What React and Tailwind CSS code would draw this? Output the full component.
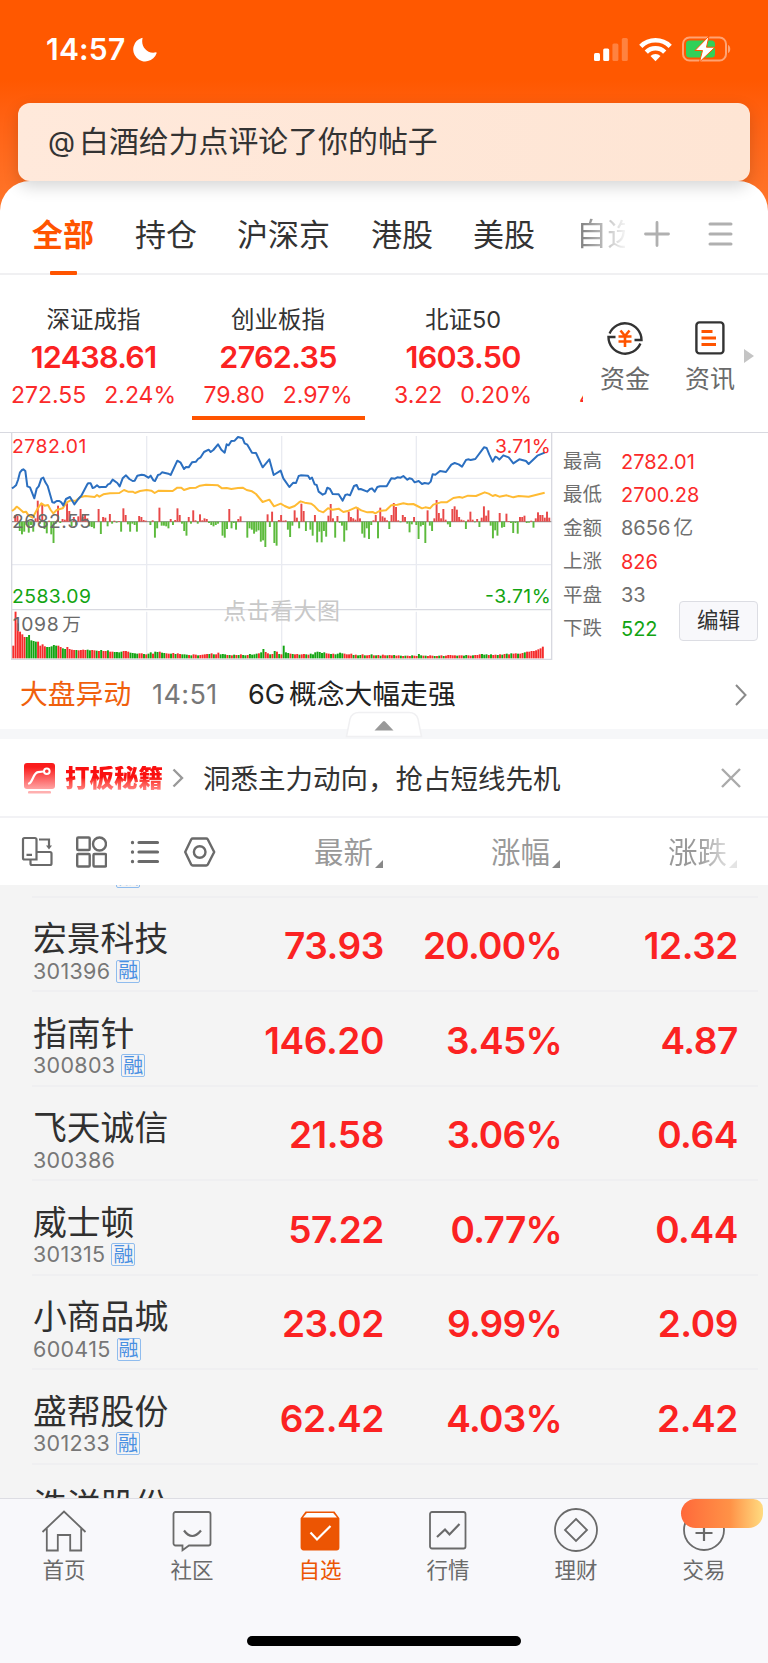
import { useState } from 'react';

const TABS = [
  { name: '全部', gap: '' },
  { name: '持仓', gap: 'ml-[41px]' },
  { name: '沪深京', gap: 'ml-[40px]' },
  { name: '港股', gap: 'ml-[41px]' },
  { name: '美股', gap: 'ml-[40px]' },
];

const INDEXES = [
  { name: '深证成指', value: '12438.61', diff: '272.55', pct: '2.24%', box: 'w-[187px]' },
  { name: '创业板指', value: '2762.35', diff: '79.80', pct: '2.97%', box: 'w-[182px]' },
  { name: '北证50', value: '1603.50', diff: '3.22', pct: '0.20%', box: 'w-[188px]' },
];

const STATS = [
  { label: '最高', value: '2782.01', color: 'text-[#fb2a2a]' },
  { label: '最低', value: '2700.28', color: 'text-[#fb2a2a]' },
  { label: '金额', value: '8656', unit: '亿', color: 'text-[#6f6f6f]' },
  { label: '上涨', value: '826', color: 'text-[#fb2a2a]' },
  { label: '平盘', value: '33', color: 'text-[#6f6f6f]' },
  { label: '下跌', value: '522', color: 'text-[#12a412]' },
];

const STOCKS = [
  { name: '宏景科技', code: '301396', margin: true, price: '73.93', pct: '20.00%', change: '12.32' },
  { name: '指南针', code: '300803', margin: true, price: '146.20', pct: '3.45%', change: '4.87' },
  { name: '飞天诚信', code: '300386', margin: false, price: '21.58', pct: '3.06%', change: '0.64' },
  { name: '威士顿', code: '301315', margin: true, price: '57.22', pct: '0.77%', change: '0.44' },
  { name: '小商品城', code: '600415', margin: true, price: '23.02', pct: '9.99%', change: '2.09' },
  { name: '盛帮股份', code: '301233', margin: true, price: '62.42', pct: '4.03%', change: '2.42' },
];

// Chart space is 3 units per pixel
const PRICE_LINE =
  '36,190 42,186 48,181 54,165 60,142 66,135 70,133 76,138 82,184 90,187 103,220 110,191 116,184 124,161 130,158 136,172 143,183 157,232 163,233 170,228 178,228 184,232 190,241 198,222 210,216 223,238 235,222 244,212 262,178 264,175 272,175 278,189 284,187 291,181 298,187 304,186 318,186 324,178 330,176 338,164 352,174 359,184 368,160 378,151 388,162 398,168 404,167 412,152 425,149 434,151 445,158 452,152 460,166 465,168 474,150 480,148 486,142 505,146 512,150 532,107 542,113 552,132 558,126 566,127 576,112 588,110 594,102 602,97 612,81 626,74 632,81 640,75 654,58 664,74 674,83 680,58 686,61 694,48 704,47 714,36 728,40 734,55 742,59 756,83 768,84 788,127 808,103 821,150 842,137 850,160 868,186 880,173 888,174 896,153 902,151 924,152 930,162 936,158 944,178 950,180 956,200 968,209 976,205 982,188 990,192 998,207 1016,208 1028,227 1036,210 1042,208 1050,211 1062,183 1070,180 1076,193 1082,192 1102,200 1110,192 1116,190 1124,200 1132,186 1140,184 1160,184 1174,160 1185,161 1192,157 1202,158 1210,153 1222,164 1228,160 1236,162 1244,172 1256,168 1266,177 1274,174 1286,176 1292,170 1298,148 1306,149 1320,138 1338,141 1354,119 1364,114 1376,118 1386,125 1398,105 1404,103 1412,105 1426,102 1452,67 1460,69 1468,89 1478,110 1486,95 1492,98 1498,104 1510,91 1526,97 1540,115 1558,103 1578,108 1586,117 1612,92 1634,83';

const AVG_LINE =
  '36,258 44,252 50,245 56,249 70,262 78,260 86,272 98,278 112,252 124,235 134,242 144,240 152,255 160,265 170,255 188,250 200,232 212,226 226,228 240,217 256,213 284,216 291,210 298,215 310,208 330,205 358,204 372,195 384,200 398,200 405,204 420,198 440,195 454,197 464,204 476,197 518,198 532,188 544,188 552,195 570,189 588,188 600,182 618,179 654,181 666,190 680,189 694,192 714,189 728,188 740,195 756,199 768,207 788,231 808,224 822,244 842,236 854,243 868,249 884,243 896,233 902,229 914,233 934,236 944,244 956,257 970,262 984,250 998,254 1016,251 1030,261 1046,257 1068,247 1084,256 1102,262 1118,261 1126,265 1138,258 1158,256 1174,241 1192,239 1210,235 1224,238 1240,237 1252,243 1266,250 1276,247 1290,250 1300,239 1322,232 1340,232 1360,219 1378,216 1388,218 1404,212 1428,213 1454,202 1466,206 1478,213 1486,210 1498,215 1520,211 1540,217 1556,213 1586,215 1610,209 1634,203';

const FLOW = [
  0, 20, 18, -28, -38, -30, -10, -33, -10, -30, 10, 63, -6, 52, -22, -35, 3, -38, -64, -6, 48, -4, 8, 6, 55, 32, -14, 14,
  -10, 16, 38, 15, 22, 10, -14, -16, -20, 0, 38, -37, 14, 12, -14, 23, -6, 3, -3, 2, -30, 40, 20, -8, -30, -6, -10, -30,
  17, 14, 5, 3, 0, -10, 4, -48, -20, 42, -12, -12, -14, -20, 8, -10, 5, 40, 20, -6, -28, -42, 14, -6, 34, 4, -6, 22, 4,
  10, 8, -4, -10, -14, -10, -6, 0, -42, -48, -22, 38, -20, -4, -24, 8, 16, 0, 0, -48, -20, -24, -36, -30, -26, -60, -56,
  -76, 22, -16, 30, -64, -72, 5, 20, 3, 4, -24, -46, -12, 34, 12, -20, 54, 32, -28, 0, -24, -42, 20, -62, -30, -62, -28,
  -45, 18, 53, 10, -48, 17, -4, -12, -60, -26, 30, 14, 10, 6, 42, 10, -36, -48, -20, -52, -10, 4, 20, -50, 42, 16, 12,
  4, -22, 20, 56, 44, 4, -2, 20, 14, -6, -32, -8, 14, -10, -52, -14, -10, -64, 34, -12, -28, 10, 65, 26, 10, 38, 6, -8,
  -16, 38, 46, 36, 14, 6, 4, -22, 6, 30, 6, -2, 8, -16, 12, 46, 18, 34, -12, -50, -26, -42, 26, -18, -16, 24, 2, -4,
  -34, -4, -36, 14, 14, 18, -4, -3, 3, -18, 10, 28, 20, 20, 12, 30, 12,
];

// negative = falling minute
const VOLUME = [
  38, 140, 105, 80, 72, 64, -64, -70, -54, -52, -50, 50, 38, 42, 36, -34, -34, -36, -40, -38, 38, 34, -30, -28, 34, 28,
  26, 25, -25, 24, 25, 26, 25, -26, -24, 25, 24, -23, 22, -25, 22, 22, -24, 20, 20, -19, -19, -18, -20, 22, 22, 20, -17,
  -16, -15, -14, 15, 15, -13, 12, -14, -18, 14, -20, -19, 20, -17, -16, 15, 14, -14, 16, -13, 15, 13, -12, -12, -11, 10,
  -9, 12, 11, -9, 10, 11, 12, 13, -13, 15, -12, 12, 17, -12, -13, -12, 10, -10, 9, -11, 10, -10, 12, -10, -9, 10, -13,
  -11, -12, -14, 15, -18, -28, 19, 15, -12, 13, -22, 20, -13, 12, -38, -18, -16, 14, -13, 12, 13, -11, 12, 13, -12, 11,
  -14, -12, -18, -20, -19, -16, -18, 15, 14, -13, 14, -12, -14, -17, -15, 14, 12, 12, 14, -10, 11, -9, -10, 12, -9, 9,
  10, -12, 9, -9, 10, -8, 11, 9, -9, 10, 9, -10, 8, 9, -8, 7, -8, 8, 7, -9, 8, 7, -13, -9, 8, -8, 7, 9, 8, -7, 7, -8,
  9, -7, 8, 10, 10, 9, 9, -8, 9, 9, -8, -10, 9, 8, -9, 10, 10, 12, -13, -11, -12, 10, -12, 10, 11, -10, 12, -11, 13, -14,
  12, -15, 14, 15, -14, 14, 16, -18, 20, 20, 22, 22, 24, 27, 30, 35,
];

function StatusBar() {
  return (
    <div className="flex h-[103px] items-center px-[46px] pb-[5px] text-white">
      <span className="text-[30px] font-semibold leading-none tracking-[0.2px]">14:57</span>
      <svg className="ml-[8px]" width="25" height="25" viewBox="0 0 25 25">
        <path d="M8.7 .9Q9.3 .4 9.6 1.2C7.5 8.5 13.5 17.5 23 15.3Q24 15.3 23.6 16.2A12 12 0 1 1 8.7 .9z" fill="#fff" />
      </svg>
      <div className="ml-auto -mr-[10px] flex items-center">
        <svg width="35" height="23" viewBox="0 0 35 23" fill="#fff">
          <rect x="0" y="15" width="6" height="8" rx="1.5" />
          <rect x="9.2" y="10.5" width="6" height="12.5" rx="1.5" />
          <rect x="18.4" y="5.5" width="6" height="17.5" rx="1.5" opacity=".25" />
          <rect x="27.8" y="0" width="6" height="23" rx="1.5" opacity=".25" />
        </svg>
        <svg className="ml-[10px]" width="33" height="25" viewBox="0 0 33 25" fill="none" stroke="#fff" strokeWidth="4.6">
          <path d="M1.8 9.3a21 21 0 0 1 29.4 0" />
          <path d="M7.3 15a13 13 0 0 1 18.4 0" />
          <path d="M16.5 24.2l-5-5.2a7.2 7.2 0 0 1 10 0z" fill="#fff" stroke="none" />
        </svg>
        <svg className="ml-[10px]" width="50" height="26" viewBox="0 0 50 26">
          <rect x="1" y="1.5" width="43" height="23" rx="6.5" fill="none" stroke="#fff" strokeOpacity=".45" strokeWidth="2" />
          <path d="M46 9c3 1 3 7 0 8z" fill="#fff" opacity=".45" />
          <rect x="4" y="4.5" width="29" height="17" rx="3.5" fill="#31d158" />
          <path d="M27 0L13 14.5h7.5L17.5 26 33 11.2h-8.5z" fill="#fff" stroke="#ff5800" strokeWidth="1" />
        </svg>
      </div>
    </div>
  );
}

function TabBar({ active, onChange }) {
  return (
    <div className="flex h-[94px] items-center border-b-2 border-[#f0f0f2] pl-[32px] pt-[14px] text-[31px]">
      {TABS.map((t) => (
        <button
          key={t.name}
          onClick={() => onChange(t.name)}
          className={`relative h-full leading-none ${t.gap} ${active === t.name ? 'font-bold text-[#ff5400]' : 'text-[#333]'}`}
        >
          {t.name}
          {active === t.name && <span className="absolute -bottom-[2px] left-[18px] h-[4px] w-[27px] rounded-[1px] bg-[#ff5400]" />}
        </button>
      ))}
      <span className="ml-[41px] w-[49px] overflow-hidden whitespace-nowrap bg-linear-to-r from-[#777] to-[#f4f4f4] bg-clip-text text-transparent">
        自选
      </span>
      <svg className="ml-[19px]" width="26" height="26" viewBox="0 0 26 26" stroke="#b0b0b0" strokeWidth="2.8" strokeLinecap="round">
        <path d="M13 1.5v23M1.5 13h23" />
      </svg>
      <svg className="ml-[38px]" width="25" height="24" viewBox="0 0 25 24" stroke="#b0b0b0" strokeWidth="3" strokeLinecap="round">
        <path d="M2 2h21M2 12h21M2 22h21" />
      </svg>
    </div>
  );
}

function IndexStrip() {
  return (
    <div className="flex h-[157px]">
      <div className="flex w-[583px] overflow-hidden">
        {INDEXES.map((it, i) => (
          <div key={it.name} className={`relative flex shrink-0 flex-col items-center pt-[30px] ${it.box}`}>
            <span className="text-[23.5px] leading-[30px] text-[#333]">{it.name}</span>
            <span className="mt-[5px] text-[30.5px] font-semibold leading-[34px] tracking-[-0.7px] text-[#fb2222]">{it.value}</span>
            <div className="mt-[7px] flex gap-[18px] text-[23px] leading-[28px] text-[#fb2a2a]">
              <span>{it.diff}</span>
              <span>{it.pct}</span>
            </div>
            {i === 1 && <div className="absolute bottom-[12px] left-[5px] h-[4px] w-[173px] bg-[#ff5400]" />}
          </div>
        ))}
        <span className="ml-[22px] mt-[108px] w-[4px] shrink-0 overflow-hidden text-[23px] leading-[28px] text-[#fb2a2a]">4</span>
      </div>
      <div className="flex flex-1 pl-[17px] pt-[44px] text-[25px] leading-[32px] text-[#6a6a6a]">
        <div className="flex w-[50px] flex-col items-center gap-[6px]">
          <svg width="38" height="38" viewBox="0 0 38 38" fill="none" stroke="#333" strokeWidth="2.4">
            <path d="M3.6 14.5A16.6 16.6 0 0 1 35.500 21H28.5" />
            <path d="M34.4 24.5A16.6 16.6 0 0 1 2.500 18H9.5" />
            <path d="M14.5 11.5l4.5 5.5 4.5-5.5M12.5 17.5h13M12.5 22.5h13M19 17v11" stroke="#ff5400" strokeWidth="2.6" />
          </svg>
          <span>资金</span>
        </div>
        <div className="ml-[35px] flex w-[50px] flex-col items-center gap-[6px]">
          <svg width="38" height="38" viewBox="0 0 38 38" fill="none" stroke="#333" strokeWidth="2.4">
            <rect x="5.4" y="3.4" width="27" height="31" rx="3" />
            <path d="M10.5 12.5h11M10.5 19h14.5M10.5 25.5h14.5" stroke="#ff5400" strokeWidth="2.8" />
          </svg>
          <span>资讯</span>
        </div>
        <svg className="ml-[9px] mt-[30px]" width="10" height="14" viewBox="0 0 10 14">
          <path d="M0 0l10 7-10 7z" fill="#c4c4c4" />
        </svg>
      </div>
    </div>
  );
}

function IndexChart() {
  return (
    <svg className="-mt-px ml-[11px] shrink-0" width="542" height="228" viewBox="33 21 1626 684" fontSize="58">
      <g fill="none" stroke="#e9ebf1" strokeWidth="4">
        <path d="M36 160H1654M36 419H1654" />
        <path d="M440 33V548M845 33V548M1249 33V548M440 560V700M845 560V700M1249 560V700" />
      </g>
      <path d="M35 22V703H1655V22M35 554H1655" fill="none" stroke="#d8d9e0" strokeWidth="4" />
      <text x="670" y="582" fontSize="69" fill="#c8c8c8" textLength="350">点击看大图</text>
      {VOLUME.map((v, i) => (
        <rect key={i} x={37 + i * 6.76} y={700 - Math.abs(v)} width="5.8" height={Math.abs(v)} fill={v < 0 ? '#12a412' : '#f52c2c'} />
      ))}
      <path d="M36 290H1654" stroke="#999" strokeWidth="4" />
      {FLOW.map((v, i) => (
        <rect key={i} x={36 + i * 6.76} y={v > 0 ? 290 - v : 290} width="5.8" height={Math.abs(v)} fill={v < 0 ? '#5cba3c' : '#e84848'} />
      ))}
      <polyline points={AVG_LINE} fill="none" stroke="#ffbb33" strokeWidth="6" strokeLinejoin="round" />
      <polyline points={PRICE_LINE} fill="none" stroke="#2b6fc0" strokeWidth="6" strokeLinejoin="round" />
      <text x="36" y="85" fill="#fb2a2a" textLength="223">2782.01</text>
      <text x="36" y="309" fill="#6a6a6a" textLength="237">2682.55</text>
      <text x="36" y="533" fill="#12a412" textLength="237">2583.09</text>
      <text x="1485" y="85" fill="#fb2a2a" textLength="167">3.71%</text>
      <text x="1455" y="533" fill="#12a412" textLength="197">-3.71%</text>
      <text x="38" y="618" fill="#6a6a6a" textLength="138">1098</text>
      <text x="187" y="617" fontSize="56" fill="#6a6a6a">万</text>
    </svg>
  );
}

function MarketPanel() {
  return (
    <div className="flex h-[228px] border-t border-[#d8d9e0]">
      <IndexChart />
      <div className="relative flex flex-1 flex-col pl-[10px] pt-[12px]">
        {STATS.map((s) => (
          <div key={s.label} className="flex h-[33.4px] items-center text-[20px] leading-none">
            <span className="w-[58px] text-[19.5px] text-[#6f6f6f]">{s.label}</span>
            <span className={s.color}>{s.value}</span>
            {s.unit && <span className="ml-[3px] text-[#6f6f6f]">{s.unit}</span>}
          </div>
        ))}
        <button className="absolute right-[10px] top-[168px] h-[40px] w-[79px] rounded-[4px] border border-[#dcdde3] bg-[#f8f8fb] text-[21.5px] leading-none text-[#333]">
          编辑
        </button>
      </div>
    </div>
  );
}

function NewsRow() {
  return (
    <div className="relative flex h-[79px] items-center border-b-[10px] border-[#f6f7f9] pl-[20px] text-[28px] leading-none">
      <span className="w-[132px] text-[27.8px] text-[#f0600c]">大盘异动</span>
      <span className="w-[96px] text-[27px] tracking-[0.4px] text-[#777]">14:51</span>
      <span className="text-[27px] text-[#222]">6G</span>
      <span className="ml-[4px] text-[27.8px] text-[#222]">概念大幅走强</span>
      <svg className="ml-auto mr-[21px]" width="12" height="22" viewBox="0 0 12 22" fill="none" stroke="#8a8a8a" strokeWidth="2">
        <path d="M1 1l9.5 10L1 21" />
      </svg>
      <svg className="absolute -bottom-[9px] left-[345px]" width="78" height="27" viewBox="0 0 78 27">
        <path d="M1.5 25.5L5 8Q7 1.5 14 1.5H64Q71 1.5 73 8L76.5 25.5z" fill="#fff" stroke="#f0f0f2" strokeWidth="1.5" />
        <path d="M38 10.5q1-1 2 0L48.5 19.5H29.5z" fill="#999" />
      </svg>
    </div>
  );
}

function PromoRow() {
  return (
    <div className="flex h-[79px] items-center border-b-2 border-[#f2f2f5] pl-[24px] pt-[1px] leading-none">
      <svg width="31" height="31" viewBox="0 0 31 31" fill="none">
        <defs>
          <linearGradient id="promo" x1="0" y1="0" x2="0" y2="1">
            <stop offset="0.15" stopColor="#fa1c1c" />
            <stop offset="1" stopColor="#ffa3a3" />
          </linearGradient>
        </defs>
        <rect width="31" height="26" rx="3" fill="url(#promo)" />
        <rect x="4" y="28" width="23" height="2.6" rx="1.2" fill="#ffb0b0" />
        <path d="M5 20.5C9 19 9 10 14 9.2L19.5 8.5" stroke="#fff" strokeWidth="2.2" strokeLinecap="round" />
        <circle cx="22.8" cy="8.2" r="2.8" stroke="#fff" strokeWidth="2" />
      </svg>
      <span className="ml-[10px] bg-linear-to-b from-[#fa1010] from-50% to-[#ff8080] bg-clip-text text-[24.5px] font-black text-transparent">
        打板秘籍
      </span>
      <svg className="ml-[9px]" width="12" height="20" viewBox="0 0 12 20" fill="none" stroke="#999" strokeWidth="2.4">
        <path d="M1.5 1.5l8.5 8.5-8.5 8.5" />
      </svg>
      <span className="ml-[19px] pt-[3px] text-[27.5px] text-[#333]">洞悉主力动向，抢占短线先机</span>
      <svg className="ml-auto mr-[27px]" width="20" height="20" viewBox="0 0 20 20" stroke="#aaa" strokeWidth="2.4">
        <path d="M1 1l18 18M19 1L1 19" />
      </svg>
    </div>
  );
}

function Corner({ faded }) {
  return (
    <svg className="mb-[2px] ml-[2px]" width="8" height="8" viewBox="0 0 8 8">
      <path d="M8 0v8H0z" fill={faded ? '#e4e4e4' : '#888'} />
    </svg>
  );
}

function TableHead() {
  return (
    <div className="flex h-[67px] items-center pl-[21px]">
      <svg width="32" height="32" viewBox="0 0 32 32" fill="none" stroke="#6a6a6a" strokeWidth="2.2">
        <path d="M15.5 23.5H3.5a1.5 1.5 0 0 1-1.5-1.5V3.5A1.5 1.5 0 0 1 3.5 2h10.5a1.5 1.5 0 0 1 1.5 1.5z" />
        <path d="M15.5 16h13.5a1.5 1.5 0 0 1 1.5 1.5v10a1.5 1.5 0 0 1-1.5 1.5H11a1.5 1.5 0 0 1-1.5-1.5V24M5.5 18.8h5.5" />
        <path d="M18 3.5h10v7" />
        <path d="M25 9.5h6l-3 4z" fill="#6a6a6a" stroke="none" />
      </svg>
      <svg className="ml-[22px]" width="32" height="32" viewBox="0 0 32 32" fill="none" stroke="#6a6a6a" strokeWidth="2.4">
        <rect x="2.2" y="1.5" width="12.5" height="12.5" rx="1" />
        <circle cx="24.5" cy="8" r="6.5" />
        <rect x="2.2" y="18" width="12.5" height="12.5" rx="1" />
        <rect x="18.5" y="18" width="12.5" height="12.5" rx="1" />
      </svg>
      <svg className="ml-[23px]" width="30" height="24" viewBox="0 0 30 24" stroke="#6a6a6a" strokeWidth="3.2" strokeLinecap="round">
        <path d="M9 2.5h18.5M9 12h18.5M9 21.5h18.5" />
        <path d="M2.5 2.3v.4M2.5 11.8v.4M2.5 21.3v.4" />
      </svg>
      <svg className="ml-[24px]" width="32" height="32" viewBox="0 0 32 32" fill="none" stroke="#6a6a6a" strokeWidth="2.4" strokeLinejoin="round">
        <path d="M8.8 2.5h13.4q1 0 1.5.8L30.2 16l-6.5 12.7q-.5.8-1.5.8H8.8q-1 0-1.5-.8L1.2 16 7.3 3.3q.5-.8 1.5-.8z" />
        <circle cx="15.7" cy="16" r="5.8" />
      </svg>
      <div className="flex flex-1 items-end pt-[1px] text-[29.5px] leading-[36px] text-[#999]">
        <div className="ml-[98px] flex w-[177px] items-end">
          最新
          <Corner />
        </div>
        <div className="flex w-[177px] items-end">
          涨幅
          <Corner />
        </div>
        <div className="flex items-end">
          <span className="bg-linear-to-r from-[#999] from-50% to-[#ddd] bg-clip-text text-transparent">涨跌</span>
          <Corner faded />
        </div>
      </div>
    </div>
  );
}

function StockRow({ stock }) {
  return (
    <div className="ml-[32px] mr-[10px] flex h-[94.5px] items-center border-b-2 border-[#efeff1]">
      <div className="w-[170px] pl-[1px] pt-[17px]">
        <div className="h-[38px] text-[33.8px] leading-[38px] text-[#303030]">{stock.name}</div>
        <div className="flex h-[26px] items-center gap-[6px] text-[21.5px] leading-none tracking-[0.3px] text-[#777]">
          <span>{stock.code}</span>
          {stock.margin && (
            <span className="flex h-[23px] w-[24px] items-center justify-center rounded-[2px] border-[1.5px] border-[#8fbcee] text-[20px] tracking-normal text-[#4a90e2]">
              融
            </span>
          )}
        </div>
      </div>
      <div className="flex pt-[4px] text-right text-[37px] font-semibold leading-none tracking-[-0.4px] text-[#fb2222]">
        <span className="w-[182px]">{stock.price}</span>
        <span className="w-[178px] tracking-[-0.7px]">{stock.pct}</span>
        <span className="w-[176px]">{stock.change}</span>
      </div>
    </div>
  );
}

function NavItem({ label, active, children }) {
  return (
    <div className={`flex flex-1 flex-col items-center ${active ? 'text-[#ec5503]' : 'text-[#6a6a6a]'}`}>
      <svg width="46" height="46" viewBox="0 0 46 46" fill="none" stroke="currentColor" strokeWidth="1.8">
        {children}
      </svg>
      <span className="mt-[3px] text-[21.5px] leading-[28px]">{label}</span>
    </div>
  );
}

function BottomNav() {
  return (
    <div className="relative flex h-[165px] border-t border-[#dddde3] bg-[#f8f8fb] pt-[8px]">
      <NavItem label="首页">
        <path d="M1.5 25L23 4.5 44.5 25M5.8 21v22.5h11V28h12.4v15.5h11V21" />
      </NavItem>
      <NavItem label="社区">
        <path d="M6.5 5h33a2 2 0 0 1 2 2v29.5a2 2 0 0 1-2 2H20l-6.5 4.800v-4.800h-7a2 2 0 0 1-2-2V7a2 2 0 0 1 2-2z" />
        <path d="M15 23.5q8 11 17 0" strokeWidth="2.2" />
      </NavItem>
      <NavItem label="自选" active>
        <path d="M4.5 11.5L9 5.5h28l4.5 6v29a2 2 0 0 1-2 2h-33a2 2 0 0 1-2-2z" fill="currentColor" />
        <path d="M6 10.5L9.8 6h26.4l3.8 4.5z" fill="#fff" stroke="none" />
        <path d="M13.5 25.5l6.5 7L33.5 19" stroke="#fff" strokeWidth="2.2" />
      </NavItem>
      <NavItem label="行情">
        <rect x="5" y="5" width="35.5" height="36.5" rx="2" />
        <path d="M12 30l8-7.5 4.5 5L34.5 17" strokeWidth="2.2" />
      </NavItem>
      <NavItem label="理财">
        <circle cx="23" cy="23" r="21" />
        <path d="M23 12l11 11-11 11-11-11z" />
      </NavItem>
      <NavItem label="交易">
        <circle cx="23" cy="23" r="20" />
        <path d="M23 16v18M14.5 26h17" strokeWidth="2.2" />
      </NavItem>
      <div className="absolute right-[5px] top-0 h-[29px] w-[82px] rounded-[15px] rounded-tr-[10px] bg-linear-to-r from-[#ff683a] via-[#ff9247] via-60% to-[#ffdb80]" />
      <div className="absolute bottom-[17px] left-[247px] h-[10px] w-[274px] rounded-full bg-black" />
    </div>
  );
}

export default function App() {
  const [tab, setTab] = useState('全部');

  return (
    <div className="h-[1663px] w-[768px] overflow-hidden bg-linear-to-b from-[#ff5800] from-[80px] to-[#ff7a2e] to-[230px] font-['Inter','Noto_Sans_CJK_SC',sans-serif]">
      <StatusBar />
      <div className="relative z-10 mx-[18px] flex h-[78px] items-center rounded-[12px] bg-linear-to-r from-[#ffe9db] to-[#fee5d4] pl-[30px] text-[29.9px] leading-none text-[#333] shadow-[0_6px_16px_rgba(0,0,0,0.16)]">
        <span className="w-[31px] text-[28px]">@</span>
        <span>白酒给力点评论了你的帖子</span>
      </div>
      <div className="flex h-[1482px] flex-col rounded-t-[30px] bg-white">
        <TabBar active={tab} onChange={setTab} />
        <IndexStrip />
        <MarketPanel />
        <NewsRow />
        <PromoRow />
        <TableHead />
        <div className="flex-1 overflow-hidden bg-[#f4f4f4]">
          <div className="-mt-[82px]">
            <StockRow stock={{ name: '', code: '301396', margin: true, price: '', pct: '', change: '' }} />
            {STOCKS.map((s) => (
              <StockRow key={s.code} stock={s} />
            ))}
            <StockRow stock={{ name: '浩洋股份', code: '300833', margin: true, price: '', pct: '', change: '' }} />
          </div>
        </div>
        <BottomNav />
      </div>
    </div>
  );
}
